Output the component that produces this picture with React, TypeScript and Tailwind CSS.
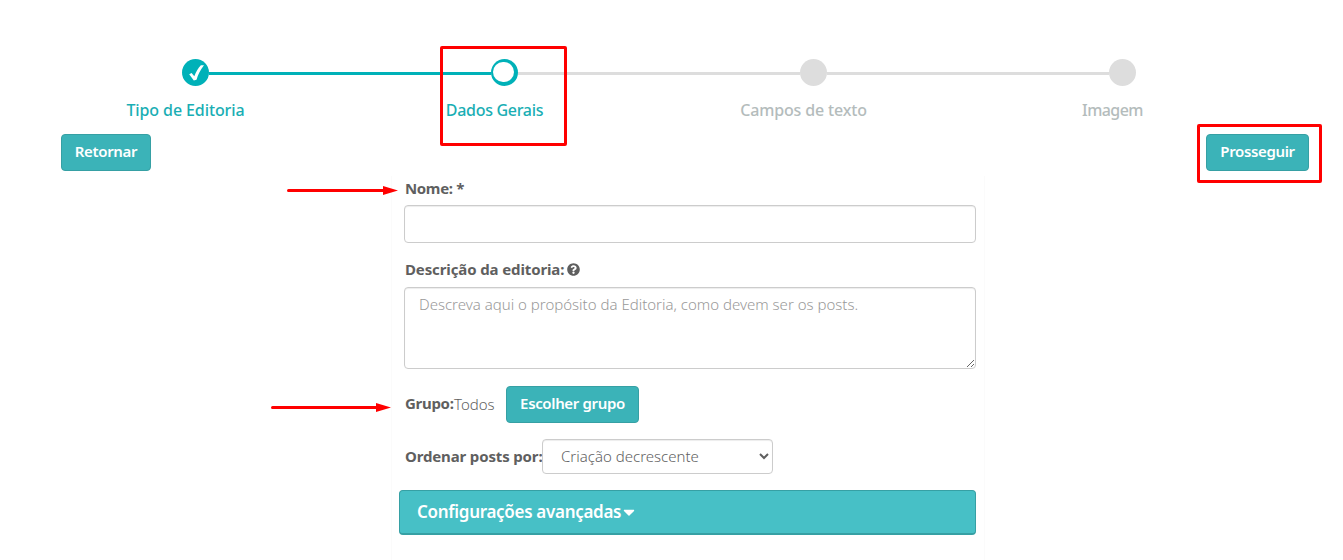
import { Fragment } from "react";
import { FaCaretDown, FaQuestionCircle } from "react-icons/fa";

type StepStatus = "done" | "current" | "pending";

const steps: { label: string; status: StepStatus; tracking: string }[] = [
  { label: "Tipo de Editoria", status: "done", tracking: "tracking-[-0.1px]" },
  { label: "Dados Gerais", status: "current", tracking: "tracking-[-0.3px]" },
  { label: "Campos de texto", status: "pending", tracking: "tracking-[-0.15px]" },
  { label: "Imagem", status: "pending", tracking: "tracking-[-0.55px]" },
];

function StepDot({ status }: { status: StepStatus }) {
  if (status === "done") {
    return (
      <div className="w-[27px] h-[27px] rounded-full bg-[#00b1b8] shrink-0">
        <svg viewBox="0 0 27 27" className="w-[27px] h-[27px]">
          <path
            d="M7.2 15.2 9.6 13.9 12.3 17.3C13.8 13.2 16.2 9.2 18.9 6.3L22 6.3C18.3 10.8 16.2 15.4 14.5 20.8L11.8 21.6Z"
            fill="#fff"
          />
        </svg>
      </div>
    );
  }
  if (status === "current") {
    return (
      <div className="w-[27px] h-[27px] rounded-full bg-[#00b1b8] shrink-0 pt-[3px] pl-[2px]">
        <div className="w-[21px] h-[20px] rounded-full bg-white" />
      </div>
    );
  }
  return <div className="w-[27px] h-[27px] rounded-full bg-[#ddd] shrink-0" />;
}

function Stepper() {
  return (
    <div>
      <div className="flex items-center pl-[182px]">
        {steps.map((step, i) => (
          <Fragment key={step.label}>
            {i > 0 && (
              <div
                className={
                  step.status === "pending"
                    ? "w-[282px] h-[3px] mt-[2px] bg-[#ddd]"
                    : "w-[282px] h-[3px] mt-[2px] bg-[#00b1b8]"
                }
              />
            )}
            <StepDot status={step.status} />
          </Fragment>
        ))}
      </div>
      <div className="flex pl-[31px] pt-3 h-[48px]">
        {steps.map((step) => (
          <div
            key={step.label}
            className={`w-[309px] text-center text-[16px] leading-6 font-medium ${step.tracking} ${
              step.status === "pending" ? "text-[#b4bcbc]" : "text-[#19aeb4]"
            }`}
          >
            {step.label}
          </div>
        ))}
      </div>
    </div>
  );
}

function Button({ children, className }: { children: string; className: string }) {
  return (
    <button
      className={`h-[37px] rounded-[4px] border border-[#36a0a4] bg-[#3bb3b8] text-white font-semibold text-[15px] leading-none pb-[3px] whitespace-nowrap tracking-[-0.35px] ${className}`}
    >
      {children}
    </button>
  );
}

function Arrow({ length, className }: { length: number; className: string }) {
  return (
    <svg width={length} height="9" className={`absolute ${className}`}>
      <path d={`M1.5 4.5H${length - 14}`} stroke="#f00" strokeWidth="3" strokeLinecap="round" />
      <path d={`M${length - 15} 0 ${length} 4.5 ${length - 15} 9Z`} fill="#f00" />
    </svg>
  );
}

export default function App() {
  return (
    <div className="relative w-[1343px] h-[560px] overflow-hidden bg-white pt-[59px] text-[#5f5f5f] font-['Noto_Sans','Open_Sans',sans-serif]">
      <Stepper />

      <div className="flex justify-between pl-[61px] pr-[34px]">
        <Button className="w-[90px]">Retornar</Button>
        <Button className="w-[103px]">Prosseguir</Button>
      </div>

      <form className="ml-[391px] mt-[5px] w-[594px] h-[384px] border-x border-[#fbfbfb] pl-3 pr-2">
        <label className="block h-[29px] pt-[2px] pl-px text-[15px] leading-5 font-bold tracking-[-0.35px]">
          Nome: *
        </label>
        <input className="block w-full h-[38px] rounded-[4px] border border-[#ccc] shadow-[inset_0_1px_1px_rgba(0,0,0,0.075)]" />

        <label className="flex items-center h-[44px] pt-[8px] pl-px text-[15px] leading-5 font-bold tracking-[-0.12px]">
          Descrição da editoria:
          <FaQuestionCircle className="ml-[3px] size-[13px]" />
        </label>
        <textarea
          placeholder="Descreva aqui o propósito da Editoria, como devem ser os posts."
          className="block w-full h-[82px] rounded-[4px] border border-[#ccc] px-[14px] py-[5px] text-[15px] leading-[22px] font-light placeholder:text-[#999] resize shadow-[inset_0_1px_1px_rgba(0,0,0,0.075)]"
        />

        <div className="flex items-center mt-[17px] text-[15px]">
          <span className="w-[50px] pl-px pb-[2px] font-bold tracking-[-0.3px] whitespace-nowrap">
            Grupo:
          </span>
          <span className="w-[52px] pb-px font-light">Todos</span>
          <Button className="w-[133px]">Escolher grupo</Button>
        </div>

        <div className="flex items-center mt-4 text-[15px]">
          <label className="w-[138px] pl-px font-bold tracking-[-0.15px] whitespace-nowrap">
            Ordenar posts por:
          </label>
          <select className="w-[231px] h-[35px] rounded-[4px] border border-[#ccc] bg-white pl-[14px] pr-[2px] pb-[2px] font-light shadow-[inset_0_1px_1px_rgba(0,0,0,0.075)]">
            <option>Criação decrescente</option>
          </select>
        </div>

        <div className="flex items-center -ml-[5px] mt-4 h-[45px] rounded-[4px] border border-b-2 border-[#36a0a4] bg-[#47c0c6] pl-[17px] text-white text-[17px] font-semibold tracking-[-0.3px]">
          Configurações avançadas
          <FaCaretDown className="-ml-px size-[18px]" />
        </div>
      </form>

      {/* callouts */}
      <div className="absolute left-[440px] top-[46px] w-[127px] h-[100px] border-3 border-[#f00] rounded-[2px]" />
      <div className="absolute left-[1197px] top-[124px] w-[125px] h-[59px] border-3 border-[#f00] rounded-[2px]" />
      <Arrow length={111} className="left-[287px] top-[186px]" />
      <Arrow length={120} className="left-[271px] top-[403px]" />
    </div>
  );
}
